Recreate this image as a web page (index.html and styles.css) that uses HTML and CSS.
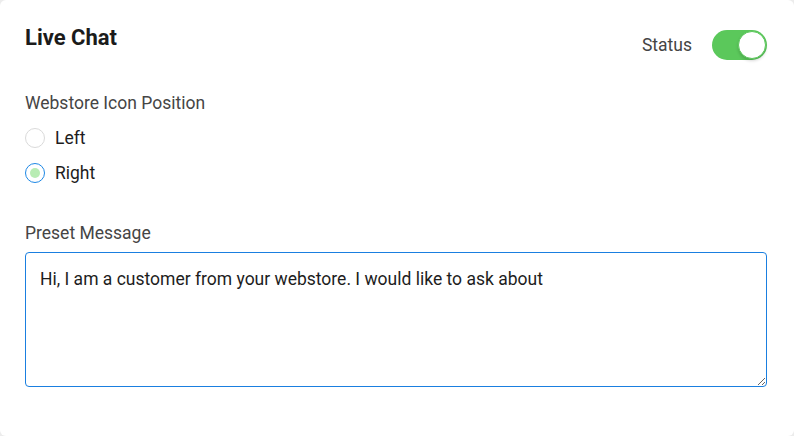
FILE: index.html
```html
<!DOCTYPE html>
<html>
<head>
<meta charset="utf-8">
<link rel="stylesheet" href="styles.css">
</head>
<body>
<div class="card">
  <div class="header">
    <h1 class="title">Live Chat</h1>
    <div class="status">
      <span class="status-label">Status</span>
      <span class="toggle"><span class="knob"></span></span>
    </div>
  </div>
  <div class="field-label pos-label">Webstore Icon Position</div>
  <div class="radios">
    <label class="radio-row"><span class="radio"></span><span class="radio-text">Left</span></label>
    <label class="radio-row"><span class="radio checked"><span class="dot"></span></span><span class="radio-text">Right</span></label>
  </div>
  <div class="field-label msg-label">Preset Message</div>
  <textarea class="message">Hi, I am a customer from your webstore. I would like to ask about</textarea>
</div>
</body>
</html>
```
FILE: styles.css
```css
html, body {
  margin: 0;
  padding: 0;
  background: #ececec;
}
body {
  font-family: Roboto, "Noto Sans", sans-serif;
}
.card {
  background: #fff;
  border-radius: 6px;
  min-height: 436px;
  box-sizing: border-box;
  padding: 24px 27px 0 25px;
}
.header {
  display: flex;
  justify-content: space-between;
  align-items: flex-start;
}
.title {
  margin: 0;
  font-size: 22px;
  line-height: 28px;
  font-weight: 700;
  color: #1b1b1b;
}
.status {
  display: flex;
  align-items: center;
  margin-top: 6px;
}
.status-label {
  font-size: 17.5px;
  color: #444;
  margin-right: 20px;
  line-height: 20px;
}
.toggle {
  width: 55px;
  height: 30px;
  border-radius: 15px;
  background: #5bc85b;
  display: flex;
  align-items: center;
  justify-content: flex-end;
  box-sizing: border-box;
  padding-right: 1px;
}
.knob {
  width: 28px;
  height: 28px;
  border-radius: 50%;
  background: #fff;
  box-sizing: border-box;
  border: 1px solid #5bc85b;
  box-shadow: 0 2px 3px rgba(0,0,0,0.15);
}
.field-label {
  font-size: 17.5px;
  line-height: 20px;
  color: #454545;
}
.pos-label {
  margin-top: 33px;
}
.radios {
  margin-top: 7px;
  display: flex;
  flex-direction: column;
}
.radio-row {
  display: flex;
  align-items: center;
  height: 35px;
}
.radio {
  width: 20px;
  height: 20px;
  border-radius: 50%;
  border: 1px solid #dadada;
  box-sizing: border-box;
  display: flex;
  align-items: center;
  justify-content: center;
}
.radio.checked {
  border-color: #1e88e5;
}
.dot {
  width: 10px;
  height: 10px;
  border-radius: 50%;
  background: #b8ecb3;
}
.radio-text {
  margin-left: 10px;
  font-size: 17.5px;
  color: #1d1d1d;
}
.msg-label {
  margin-top: 33px;
}
.message {
  display: block;
  margin-top: 9px;
  width: 100%;
  height: 135px;
  box-sizing: border-box;
  border: 1px solid #1a7fe0;
  border-radius: 4px;
  padding: 15px 14px;
  font-family: Roboto, "Noto Sans", sans-serif;
  font-size: 17.5px;
  line-height: 22px;
  color: #1d1d1d;
  outline: none;
  background: #fff;
}
```
